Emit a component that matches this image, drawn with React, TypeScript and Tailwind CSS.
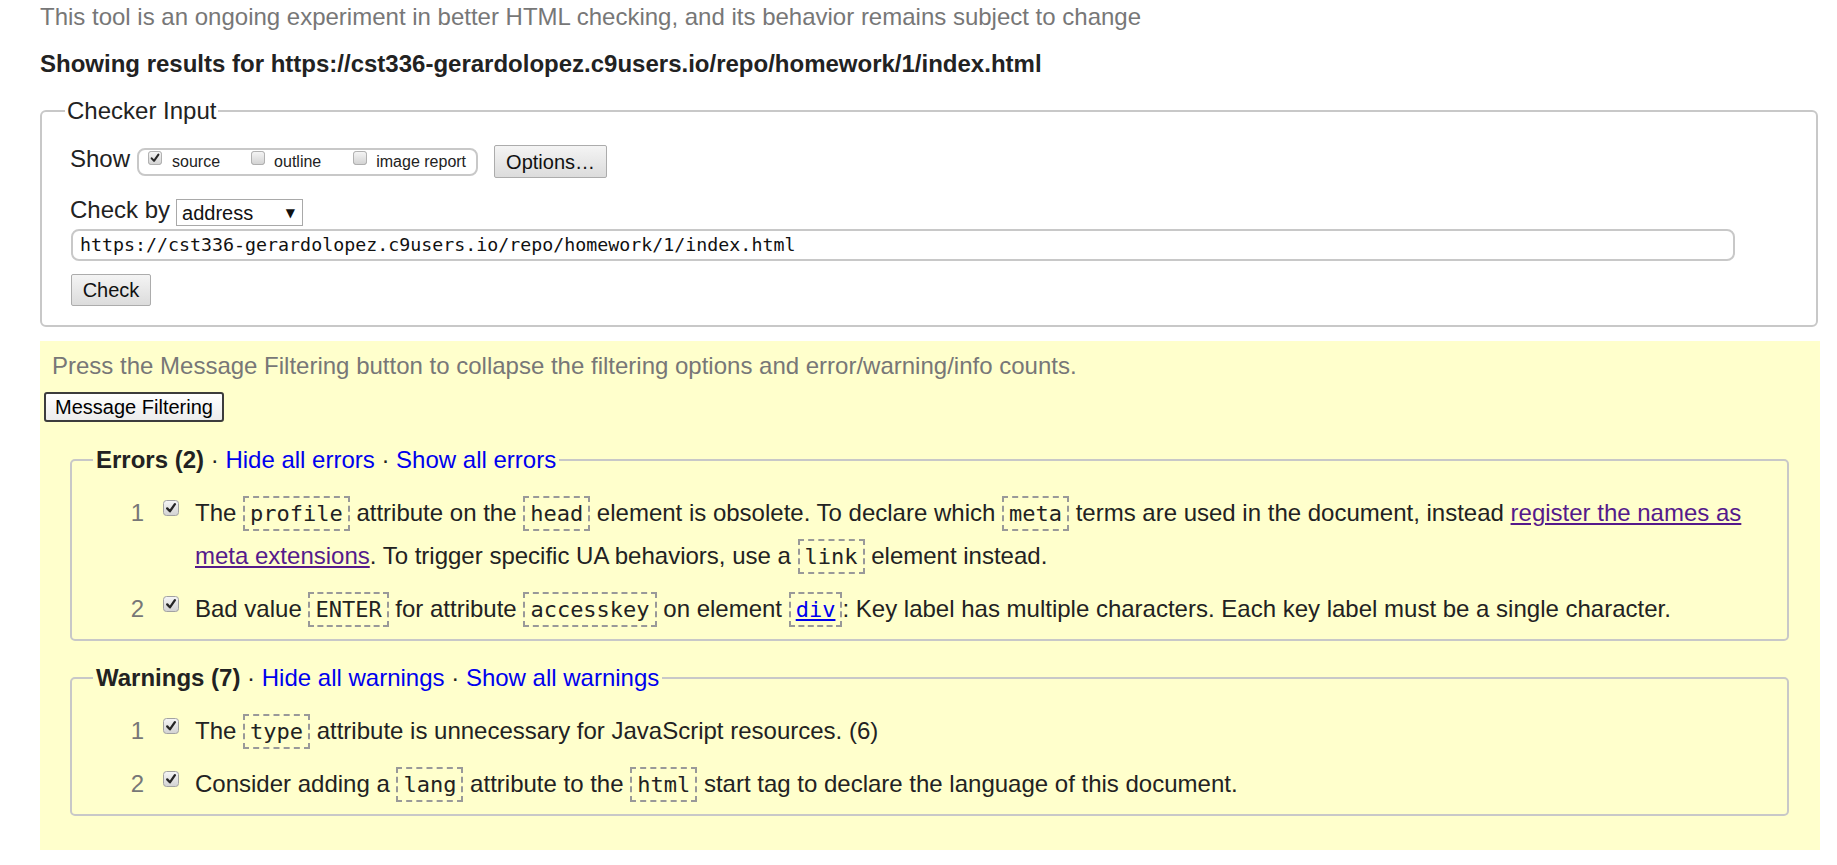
import type { ReactNode } from 'react';

// Nu HTML checker results page: checker input form plus the yellow message panel.

const url = 'https://cst336-gerardolopez.c9users.io/repo/homework/1/index.html';

function Box({ checked = false, size = 16 }: { checked?: boolean; size?: number }) {
  return (
    <svg width={size} height={size} viewBox="0 0 16 16" className="block shrink-0">
      <defs>
        <linearGradient id="cbfill" x1="0" y1="0" x2="0" y2="1">
          <stop offset="0" stopColor="#f6f6f6" />
          <stop offset="1" stopColor="#d2d2d2" />
        </linearGradient>
      </defs>
      <rect x="0.5" y="0.5" width="15" height="15" rx="3" fill="url(#cbfill)" stroke="#a2a2a2" />
      {checked ? (
        <path d="M4.2 8.4 L6.9 11.3 L11.9 4.2" fill="none" stroke="#262626" strokeWidth="2.3" strokeLinecap="round" strokeLinejoin="round" />
      ) : null}
    </svg>
  );
}

function Code({ children }: { children: ReactNode }) {
  return (
    <code className="border-2 border-dashed border-[#999] px-[5px] py-[3px] font-['DejaVu_Sans_Mono',monospace] text-[22px] text-[#222]">
      {children}
    </code>
  );
}

function Item({ n, children }: { n: number; children: ReactNode }) {
  return (
    <li className="flex items-start leading-[42px]">
      <span className="w-[48px] shrink-0 text-right text-[#777]">{n}</span>
      <span className="ml-[19px] mt-[8px] shrink-0">
        <Box checked />
      </span>
      <div className="ml-[16px]">{children}</div>
    </li>
  );
}

function Group({ title, hide, show, children }: { title: string; hide: string; show: string; children: ReactNode }) {
  return (
    <fieldset className="ml-[26px] mr-[31px] rounded-[5px] border-2 border-[#c8c8c8] pb-[8px] pl-[24px] pr-[20px] pt-[17px]">
      <legend className="ml-[-3px] px-[3px] leading-[30px]">
        <b className="font-bold">{title}</b> · <a className="text-[#0000ee]">{hide}</a> · <a className="text-[#0000ee]">{show}</a>
      </legend>
      <ol className="space-y-[10px]">{children}</ol>
    </fieldset>
  );
}

function GrayButton({ children, className }: { children: ReactNode; className: string }) {
  return (
    <div className={`flex items-center justify-center rounded-[2px] border border-[#acacac] bg-gradient-to-b from-[#f4f4f4] to-[#dcdcdc] text-[20px] text-[#111] ${className}`}>
      {children}
    </div>
  );
}

export default function App() {
  return (
    <div className="h-[865px] overflow-hidden bg-white pl-[40px] pr-[17px] font-['Liberation_Sans',Arial,sans-serif] text-[24px] text-[#222]">
      <p className="pt-[2px] leading-[30px] text-[#777]">
        This tool is an ongoing experiment in better HTML checking, and its behavior remains subject to change
      </p>
      <p className="mt-[17px] font-bold leading-[30px]">Showing results for {url}</p>

      <fieldset className="mr-[2px] mt-[17px] rounded-[6px] border-2 border-[#c8c8c8] pb-[19px] pl-[28px] pt-[19px]">
        <legend className="ml-[-5px] px-[2px] leading-[30px]">Checker Input</legend>

        <div className="flex h-[33px] items-center">
          <span className="pb-[5px]">Show</span>
          <div className="ml-[7px] flex h-[28px] items-center rounded-[8px] border-2 border-[#c8c8c8] pl-[9px] pr-[10px] text-[16px]">
            <span className="mb-[8px]"><Box checked size={14} /></span>
            <span className="ml-[10px]">source</span>
            <span className="mb-[8px] ml-[31px]"><Box size={14} /></span>
            <span className="ml-[9px]">outline</span>
            <span className="mb-[8px] ml-[32px]"><Box size={14} /></span>
            <span className="ml-[9px]">image report</span>
          </div>
          <GrayButton className="ml-[16px] h-[33px] w-[113px]">Options…</GrayButton>
        </div>

        <div className="mt-[21px] flex h-[27px] items-center">
          <span className="pb-[5px]">Check by</span>
          <div className="ml-[6px] flex h-[27px] w-[127px] items-center justify-between border border-[#a9a9a9] bg-white pl-[5px] pr-[7px] text-[20px] text-[#111]">
            <span>address</span>
            <span className="font-['DejaVu_Sans',sans-serif] text-[12px]">▼</span>
          </div>
        </div>

        <div className="ml-[1px] mt-[3px] flex h-[32px] w-[1664px] items-center rounded-[8px] border-2 border-[#c8c8c8] pl-[7px] font-['DejaVu_Sans_Mono',monospace] text-[18.3px] text-[#111]">
          {url}
        </div>

        <GrayButton className="ml-[1px] mt-[13px] h-[32px] w-[80px]">Check</GrayButton>
      </fieldset>

      <section className="mt-[14px] h-[509px] bg-[#ffffcc] pl-[4px] pt-[10px]">
        <p className="pl-[8px] leading-[30px] text-[#777]">
          Press the Message Filtering button to collapse the filtering options and error/warning/info counts.
        </p>
        <div className="mt-[11px] flex h-[30px] w-[180px] items-center justify-center rounded-[3px] border-2 border-[#3c3c3c] bg-gradient-to-b from-white to-[#ececec] text-[20px] text-black">
          Message Filtering
        </div>

        <div className="mt-[23px]">
          <Group title="Errors (2)" hide="Hide all errors" show="Show all errors">
            <Item n={1}>
              The <Code>profile</Code> attribute on the <Code>head</Code> element is obsolete. To declare which{' '}
              <Code>meta</Code> terms are used in the document, instead{' '}
              <a className="text-[#551a8b] underline">register the names as meta extensions</a>. To trigger specific UA
              behaviors, use a <Code>link</Code> element instead.
            </Item>
            <Item n={2}>
              Bad value <Code>ENTER</Code> for attribute <Code>accesskey</Code> on element{' '}
              <Code>
                <a className="text-[#0000ee] underline">div</a>
              </Code>
              : Key label has multiple characters. Each key label must be a single character.
            </Item>
          </Group>
        </div>

        <div className="mt-[22px]">
          <Group title="Warnings (7)" hide="Hide all warnings" show="Show all warnings">
            <Item n={1}>
              The <Code>type</Code> attribute is unnecessary for JavaScript resources. (6)
            </Item>
            <Item n={2}>
              Consider adding a <Code>lang</Code> attribute to the <Code>html</Code> start tag to declare the language of
              this document.
            </Item>
          </Group>
        </div>
      </section>
    </div>
  );
}
